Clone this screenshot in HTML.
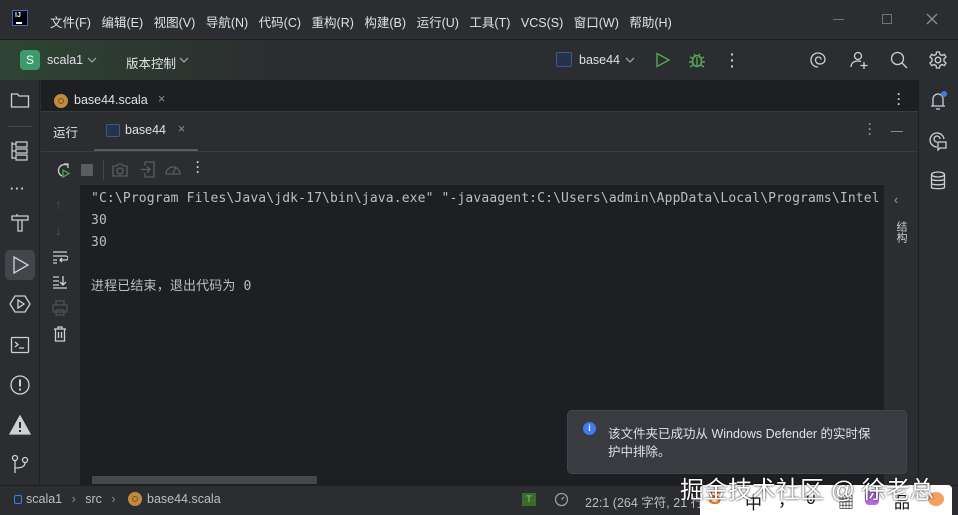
<!DOCTYPE html><html><head><meta charset="utf-8"><style>
*{margin:0;padding:0;box-sizing:border-box}
body{width:958px;height:515px;overflow:hidden;background:#2b2d30;font-family:"Liberation Sans","Noto Sans CJK SC",sans-serif;color:#dfe1e5;font-size:12.5px;position:relative}
.a{position:absolute}
svg{position:absolute;fill:none;stroke:#ced0d6;stroke-width:1.3}
.mono{font-family:"DejaVu Sans Mono","Liberation Mono","Noto Sans CJK SC",monospace;font-size:13px;color:#bcbec4;letter-spacing:0.14px}
.chev{display:inline-block;width:9px;height:6px;margin-left:4px;vertical-align:2px;border:none}
</style></head><body>
<div class="a" style="left:0;top:0;width:958px;height:40px;background:#2b2d30;border-bottom:1px solid #1e1f22"></div>
<div class="a" style="left:12px;top:10px;width:16px;height:16px;background:#000;border:1px solid #3d6dcc"><div class="a" style="left:2px;top:1px;color:#fff;font-size:7px;font-weight:bold">IJ</div><div class="a" style="left:3px;top:11px;width:6px;height:1.5px;background:#fff"></div></div>
<div class="a" style="left:50px;top:12px;font-size:12.5px">
<span style="margin-right:10.5px">文件(F)</span><span style="margin-right:10.5px">编辑(E)</span><span style="margin-right:10.5px">视图(V)</span><span style="margin-right:10.5px">导航(N)</span><span style="margin-right:10.5px">代码(C)</span><span style="margin-right:10.5px">重构(R)</span><span style="margin-right:10.5px">构建(B)</span><span style="margin-right:10.5px">运行(U)</span><span style="margin-right:10.5px">工具(T)</span><span style="margin-right:10.5px">VCS(S)</span><span style="margin-right:10.5px">窗口(W)</span><span>帮助(H)</span></div>
<div class="a" style="left:833px;top:19px;width:11px;height:1px;background:#6f737a"></div>
<div class="a" style="left:882px;top:14px;width:10px;height:10px;border:1px solid #6f737a"></div>
<svg style="left:926px;top:13px" width="12" height="12"><path d="M1 1L11 11M11 1L1 11" stroke="#8a8d93"/></svg>
<div class="a" style="left:0;top:40px;width:958px;height:40px;background:linear-gradient(90deg,#2f4534 0%,#2d3a30 12%,#2b2d30 30%)"></div>
<div class="a" style="left:20px;top:50px;width:20px;height:20px;background:#3d9a6a;border-radius:4px;color:#fff;text-align:center;line-height:20px;font-size:12px">S</div>
<div class="a" style="left:47px;top:53px">scala1</div>
<svg style="left:87px;top:57px" width="10" height="6"><path d="M1 1L5 5L9 1" stroke="#9a9da3"/></svg>
<div class="a" style="left:126px;top:53px">版本控制</div>
<svg style="left:179px;top:57px" width="10" height="6"><path d="M1 1L5 5L9 1" stroke="#9a9da3"/></svg>
<div class="a" style="left:556px;top:52px;width:16px;height:15px;border:1.2px solid #3f5a8a;border-radius:2px;background:#25324a"></div>
<div class="a" style="left:579px;top:53px">base44</div>
<svg style="left:625px;top:57px" width="10" height="6"><path d="M1 1L5 5L9 1" stroke="#9a9da3"/></svg>
<svg style="left:655px;top:52px" width="16" height="16"><path d="M2 1.5L14 8L2 14.5Z" stroke="#57a55a" stroke-width="1.4"/></svg>
<svg style="left:688px;top:51px" width="18" height="18"><ellipse cx="9" cy="10" rx="4.5" ry="5.5" stroke="#57a55a" stroke-width="1.6"/><path d="M2 6L5 7.5M16 6L13 7.5M1 11H4.5M17 11H13.5M2 16L5 14M16 16L13 14M6 3L7.5 5M12 3L10.5 5M9 6V15" stroke="#57a55a" stroke-width="1.4"/></svg>
<div class="a" style="left:730px;top:51px;color:#ced0d6;font-weight:bold;font-size:14px;line-height:6px">·<br>·<br>·</div>
<svg style="left:809px;top:51px" width="18" height="18"><path d="M9 16C4 16 2 12 2 9C2 5 5 2 9 2C13 2 16 5 16 8.5C16 11 14 13 11 13C8 13 6.5 11 6.5 9C6.5 7 8 6 9.5 6C11 6 12 7 12 8.5"/></svg>
<svg style="left:849px;top:50px" width="20" height="20"><circle cx="9" cy="6" r="3.5"/><path d="M2 17C2 13 5 11 9 11C10 11 11 11.2 12 11.5M15 12V19M11.5 15.5H18.5"/></svg>
<svg style="left:889px;top:50px" width="20" height="20"><circle cx="8.5" cy="8.5" r="6"/><path d="M13 13L18 18"/></svg>
<svg style="left:928px;top:50px" width="20" height="20"><circle cx="10" cy="10" r="2.8"/><path d="M8.5 2H11.5L12 4.5L14 5.5L16.3 4.3L18 7L16 8.7V11.3L18 13L16.3 15.7L14 14.5L12 15.5L11.5 18H8.5L8 15.5L6 14.5L3.7 15.7L2 13L4 11.3V8.7L2 7L3.7 4.3L6 5.5L8 4.5Z"/></svg>
<div class="a" style="left:0;top:80px;width:40px;height:405px;background:#2b2d30;border-right:1px solid #1e1f22"></div>
<svg style="left:10px;top:91px" width="20" height="18"><path d="M1.5 3H7.5L9 5H18.5V16H1.5Z"/></svg>
<div class="a" style="left:8px;top:126px;width:24px;height:1px;background:#43454a"></div>
<svg style="left:10px;top:141px" width="20" height="20"><path d="M2 1V18M2 3H6M2 10H6M2 17H6M6 1H17V6H6ZM6 8H17V12H6ZM6 14H17V19H6Z" stroke-width="1.2"/></svg>
<div class="a" style="left:10px;top:182px;color:#ced0d6;font-weight:bold;letter-spacing:1px">···</div>
<svg style="left:10px;top:213px" width="20" height="20"><path d="M2 3H18V7H2ZM7 3V1M8 7V18H12V7"/></svg>
<div class="a" style="left:5px;top:250px;width:30px;height:30px;background:#43454a;border-radius:5px"></div>
<svg style="left:11px;top:255px" width="20" height="20"><path d="M3 2L17 10L3 18Z"/></svg>
<svg style="left:9px;top:294px" width="22" height="20"><path d="M6 2H16L21 10L16 18H6L1 10Z"/><path d="M9 6L15 10L9 14Z"/></svg>
<svg style="left:10px;top:336px" width="20" height="18"><rect x="1.5" y="1.5" width="17" height="15" rx="1"/><path d="M5 6L8 8.5L5 11M9 12H14"/></svg>
<svg style="left:9px;top:374px" width="22" height="22"><circle cx="11" cy="11" r="9"/><path d="M11 5.5V12.5M11 14.5V16.5" stroke-width="2"/></svg>
<svg style="left:9px;top:415px" width="22" height="20"><path d="M11 1L21 19H1Z" fill="#ced0d6"/><path d="M11 7V13M11 15V17" stroke="#2b2d30" stroke-width="2"/></svg>
<svg style="left:11px;top:454px" width="18" height="20"><circle cx="4" cy="4" r="2.5"/><circle cx="14" cy="6" r="2.5"/><path d="M4 6.5V19M4 14C10 14 14 13 14 8.5"/></svg>
<div class="a" style="left:41px;top:80px;width:877px;height:38px;background:#1e1f22"></div>
<div class="a" style="left:54px;top:94px;width:14px;height:14px;border-radius:50%;background:#c08b3e"><div class="a" style="left:4px;top:4px;width:6px;height:6px;border:1.3px solid #7a5520;border-radius:50%"></div></div>
<div class="a" style="left:74px;top:93px">base44.scala</div>
<div class="a" style="left:158px;top:92px;color:#8a8d93">×</div>
<div class="a" style="left:897px;top:92px;color:#ced0d6;font-weight:bold;font-size:12px;line-height:5px">·<br>·<br>·</div>
<div class="a" style="left:41px;top:111px;width:877px;height:374px;background:#2b2d30;border-top:1px solid #393b40"></div>
<div class="a" style="left:53px;top:122px">运行</div>
<div class="a" style="left:106px;top:124px;width:14px;height:13px;border:1.2px solid #3f5a8a;border-radius:2px;background:#25324a"></div>
<div class="a" style="left:125px;top:123px">base44</div>
<div class="a" style="left:178px;top:122px;color:#8a8d93">×</div>
<div class="a" style="left:94px;top:149px;width:104px;height:3px;background:#5a5c61;border-radius:2px"></div>
<div class="a" style="left:41px;top:151px;width:877px;height:1px;background:#393b40"></div>
<div class="a" style="left:868px;top:122px;color:#8a8d93;font-weight:bold;font-size:12px;line-height:5px">·<br>·<br>·</div>
<div class="a" style="left:891px;top:131px;width:12px;height:1px;background:#8a8d93"></div>
<svg style="left:54px;top:161px" width="18" height="18"><path d="M13 4A6 6 0 1 0 8 15M10 3H14V7"/><path d="M9 9L15 12.5L9 16Z" stroke="#57a55a"/></svg>
<div class="a" style="left:81px;top:164px;width:12px;height:12px;background:#5a5c61;border-radius:1px"></div>
<div class="a" style="left:103px;top:160px;width:1px;height:20px;background:#43454a"></div>
<svg style="left:112px;top:162px" width="16" height="15"><path d="M1 4H5L6 2H10L11 4H15V14H1Z M8 6A3 3 0 1 0 8.01 6" stroke="#5a5d63"/></svg>
<svg style="left:140px;top:161px" width="16" height="17"><path d="M5 1H14V16H5M5 5V1M5 12V16M1 8.5H10M7 5.5L10 8.5L7 11.5" stroke="#5a5d63"/></svg>
<svg style="left:164px;top:161px" width="18" height="17"><path d="M2 13A7 7 0 1 1 16 13Z M9 12L12 6" stroke="#5a5d63"/></svg>
<div class="a" style="left:196px;top:160px;color:#ced0d6;font-weight:bold;font-size:12px;line-height:5px">·<br>·<br>·</div>
<div class="a" style="left:55px;top:196px;color:#4e5157;font-size:14px">↑</div>
<div class="a" style="left:55px;top:222px;color:#4e5157;font-size:14px">↓</div>
<svg style="left:52px;top:250px" width="16" height="14"><path d="M1 2H15M1 6H14A2 2 0 0 1 14 10H8M10 8L8 10L10 12M1 10H5M1 13H5"/></svg>
<svg style="left:52px;top:275px" width="16" height="14"><path d="M1 2H7M1 6H7M1 10H7M1 13H15M11 1V10M8 7L11 10L14 7"/></svg>
<svg style="left:52px;top:300px" width="16" height="16"><path d="M4 5V1H12V5M1 5H15V12H1ZM4 10H12V15H4Z" stroke="#4e5157"/></svg>
<svg style="left:53px;top:326px" width="14" height="16"><path d="M1 3H13M5 3V1H9V3M2.5 3V15H11.5V3M5.5 6V12M8.5 6V12"/></svg>
<div class="a" style="left:80px;top:185px;width:803px;height:300px;background:#1e1f22"></div>
<div class="a mono" style="left:91px;top:188px;width:790px;overflow:hidden;white-space:nowrap;line-height:22px">"C:\Program Files\Java\jdk-17\bin\java.exe" "-javaagent:C:\Users\admin\AppData\Local\Programs\Intel<br>30<br>30<br><br>进程已结束，退出代码为 0</div>
<div class="a" style="left:92px;top:476px;width:225px;height:8px;background:#45474b"></div>
<div class="a" style="left:883px;top:185px;width:35px;height:300px;background:#2b2d30;border-left:1px solid #1e1f22"></div>
<div class="a" style="left:894px;top:193px;color:#9a9da3">‹</div>
<div class="a" style="left:893px;top:221px;font-size:11px;writing-mode:vertical-rl;color:#ced0d6">结构</div>
<div class="a" style="left:918px;top:80px;width:40px;height:405px;background:#2b2d30;border-left:1px solid #1e1f22"></div>
<svg style="left:928px;top:90px" width="20" height="22"><path d="M3 16H17M5 16V9A5 5 0 0 1 15 9V16M8 19H12"/></svg>
<div class="a" style="left:941px;top:91px;width:6px;height:6px;border-radius:50%;background:#3d7bf0"></div>
<svg style="left:928px;top:131px" width="20" height="20"><path d="M9 16A7 7 0 1 1 16 8M9 11A3 3 0 1 1 12 8M10 11H18V17H12L10 19Z"/></svg>
<svg style="left:930px;top:171px" width="16" height="20"><ellipse cx="8" cy="3.5" rx="6.5" ry="2.5"/><path d="M1.5 3.5V16.5C1.5 18 14.5 18 14.5 16.5V3.5M1.5 8C1.5 10 14.5 10 14.5 8M1.5 12.3C1.5 14.3 14.5 14.3 14.5 12.3"/></svg>
<div class="a" style="left:0;top:485px;width:958px;height:30px;background:#2b2d30;border-top:1px solid #1e1f22"></div>
<div class="a" style="left:14px;top:495px;width:8px;height:9px;border:1.3px solid #3d7bf0;border-radius:2px"></div>
<div class="a" style="left:26px;top:492px;color:#bcbec4">scala1 <span style="color:#8a8d93;margin:0 6px">›</span> src <span style="color:#8a8d93;margin:0 6px">›</span></div>
<div class="a" style="left:128px;top:492px;width:14px;height:14px;border-radius:50%;background:#c08b3e"><div class="a" style="left:4px;top:4px;width:6px;height:6px;border:1.3px solid #7a5520;border-radius:50%"></div></div>
<div class="a" style="left:147px;top:492px;color:#bcbec4">base44.scala</div>
<div class="a" style="left:522px;top:493px;width:14px;height:13px;background:#3b6a2a;color:#8fd06a;font-size:9px;text-align:center;line-height:13px">T</div>
<svg style="left:554px;top:492px" width="15" height="15"><circle cx="7.5" cy="7.5" r="6" stroke="#9a9da3"/><path d="M7.5 7.5L10 5" stroke="#9a9da3"/></svg>
<div class="a" style="left:585px;top:492px;color:#bcbec4">22:1 (264 字符, 21 行</div>
<div class="a" style="left:567px;top:410px;width:340px;height:64px;background:#393b40;border:1px solid #43454a;border-radius:5px"></div>
<div class="a" style="left:583px;top:422px;width:13px;height:13px;border-radius:50%;background:#3d7bf0;color:#fff;font-size:9px;text-align:center;line-height:13px;font-weight:bold">i</div>
<div class="a" style="left:608px;top:425px;font-size:12.5px;line-height:18px;color:#dfe1e5">该文件夹已成功从 Windows Defender 的实时保<br>护中排除。</div>
<div class="a" style="left:700px;top:485px;width:252px;height:30px;background:#fff;border-radius:4px 4px 0 0"></div>
<div class="a" style="left:708px;top:487px;color:#f07020;font-size:20px;font-weight:bold">S</div>
<div class="a" style="left:745px;top:489px;color:#111;font-size:17px">中</div>
<div class="a" style="left:778px;top:486px;color:#111;font-size:17px">，</div>
<div class="a" style="left:805px;top:489px;color:#111;font-size:16px">⊍</div>
<div class="a" style="left:838px;top:489px;color:#111;font-size:16px">▦</div>
<div class="a" style="left:865px;top:491px;width:14px;height:14px;background:#b06ce0;border-radius:4px"></div>
<div class="a" style="left:894px;top:489px;color:#111;font-size:16px">品</div>
<div class="a" style="left:928px;top:492px;width:16px;height:14px;background:#f0a060;border-radius:50%"></div>
<div class="a" style="left:680px;top:470px;color:#fff;font-size:24px;text-shadow:0 0 2px #000">掘金技术社区 @ 徐老总</div>
</body></html>
